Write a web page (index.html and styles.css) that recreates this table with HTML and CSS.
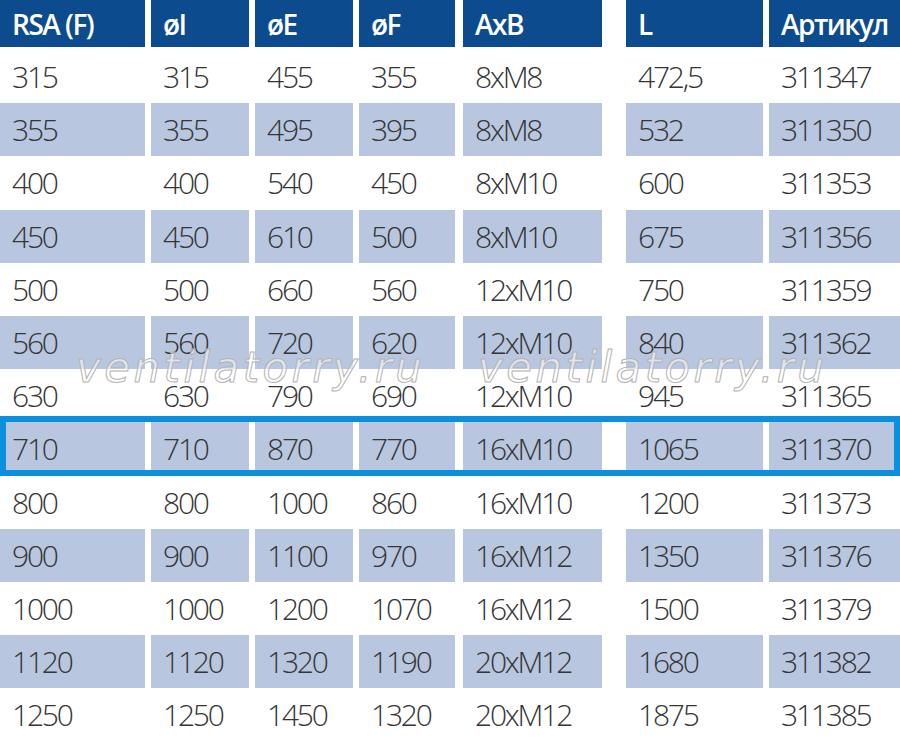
FILE: index.html
```html
<!DOCTYPE html>
<html lang="ru">
<head>
<meta charset="utf-8">
<title>RSA (F)</title>
<link rel="stylesheet" href="styles.css">
</head>
<body>
<div class="sheet">
  <div class="row head">
    <div class="cell c1">RSA (F)</div><div class="cell c2">øI</div><div class="cell c3">øE</div><div class="cell c4">øF</div><div class="cell c5">AxB</div><div class="cell c6">L</div><div class="cell c7">Артикул</div>
  </div>
  <div class="row"><div class="cell c1">315</div><div class="cell c2">315</div><div class="cell c3">455</div><div class="cell c4">355</div><div class="cell c5">8xM8</div><div class="cell c6">472,5</div><div class="cell c7">311347</div></div>
  <div class="row alt"><div class="cell c1">355</div><div class="cell c2">355</div><div class="cell c3">495</div><div class="cell c4">395</div><div class="cell c5">8xM8</div><div class="cell c6">532</div><div class="cell c7">311350</div></div>
  <div class="row"><div class="cell c1">400</div><div class="cell c2">400</div><div class="cell c3">540</div><div class="cell c4">450</div><div class="cell c5">8xM10</div><div class="cell c6">600</div><div class="cell c7">311353</div></div>
  <div class="row alt"><div class="cell c1">450</div><div class="cell c2">450</div><div class="cell c3">610</div><div class="cell c4">500</div><div class="cell c5">8xM10</div><div class="cell c6">675</div><div class="cell c7">311356</div></div>
  <div class="row"><div class="cell c1">500</div><div class="cell c2">500</div><div class="cell c3">660</div><div class="cell c4">560</div><div class="cell c5">12xM10</div><div class="cell c6">750</div><div class="cell c7">311359</div></div>
  <div class="row alt"><div class="cell c1">560</div><div class="cell c2">560</div><div class="cell c3">720</div><div class="cell c4">620</div><div class="cell c5">12xM10</div><div class="cell c6">840</div><div class="cell c7">311362</div></div>
  <div class="row"><div class="cell c1">630</div><div class="cell c2">630</div><div class="cell c3">790</div><div class="cell c4">690</div><div class="cell c5">12xM10</div><div class="cell c6">945</div><div class="cell c7">311365</div></div>
  <div class="row alt"><div class="cell c1">710</div><div class="cell c2">710</div><div class="cell c3">870</div><div class="cell c4">770</div><div class="cell c5">16xM10</div><div class="cell c6">1065</div><div class="cell c7">311370</div></div>
  <div class="row"><div class="cell c1">800</div><div class="cell c2">800</div><div class="cell c3">1000</div><div class="cell c4">860</div><div class="cell c5">16xM10</div><div class="cell c6">1200</div><div class="cell c7">311373</div></div>
  <div class="row alt"><div class="cell c1">900</div><div class="cell c2">900</div><div class="cell c3">1100</div><div class="cell c4">970</div><div class="cell c5">16xM12</div><div class="cell c6">1350</div><div class="cell c7">311376</div></div>
  <div class="row"><div class="cell c1">1000</div><div class="cell c2">1000</div><div class="cell c3">1200</div><div class="cell c4">1070</div><div class="cell c5">16xM12</div><div class="cell c6">1500</div><div class="cell c7">311379</div></div>
  <div class="row alt"><div class="cell c1">1120</div><div class="cell c2">1120</div><div class="cell c3">1320</div><div class="cell c4">1190</div><div class="cell c5">20xM12</div><div class="cell c6">1680</div><div class="cell c7">311382</div></div>
  <div class="row"><div class="cell c1">1250</div><div class="cell c2">1250</div><div class="cell c3">1450</div><div class="cell c4">1320</div><div class="cell c5">20xM12</div><div class="cell c6">1875</div><div class="cell c7">311385</div></div>

  <div class="highlight"></div>
  <div class="watermark wm1">ventilatorry.ru</div>
  <div class="watermark wm2">ventilatorry.ru</div>
</div>
</body>
</html>
```

FILE: styles.css
```css
html, body {
  margin: 0;
  padding: 0;
  background: #ffffff;
}
body {
  width: 900px;
  height: 743px;
  overflow: hidden;
}
.sheet {
  position: relative;
  width: 900px;
  height: 743px;
  display: flex;
  flex-direction: column;
  font-family: "Open Sans", "Noto Sans", sans-serif;
}
.row {
  display: grid;
  grid-template-columns: 151px 104px 104px 104px 163px 143px 131px;
  height: 53.2px;
  flex: none;
}
.cell {
  display: flex;
  align-items: center;
  padding-left: 12px;
  margin-right: 6px;
  font-size: 30px;
  font-weight: 300;
  letter-spacing: -2.2px;
  color: #353535;
  white-space: nowrap;
  overflow: hidden;
}
.c4 { margin-right: 8px; }
.c5 { margin-right: 24px; }
.c7 { margin-right: 0; }
.row.alt .cell {
  background: #b9c6df;
}
.row.head {
  height: 47px;
  margin-bottom: 3px;
}
.row.head .cell {
  background: #0c4b8e;
  color: #ffffff;
  font-size: 28px;
  font-weight: 600;
  letter-spacing: -1.5px;
}
.highlight {
  position: absolute;
  left: 0;
  top: 416px;
  width: 900px;
  height: 60px;
  box-sizing: border-box;
  border: 6px solid #0a90dc;
}
.watermark {
  position: absolute;
  top: 347px;
  font-family: "DejaVu Sans", sans-serif;
  font-style: oblique;
  font-size: 42px;
  line-height: 42px;
  letter-spacing: 3.4px;
  color: rgba(255, 255, 255, 0.55);
  -webkit-text-stroke: 1px #b3b3b3;
  white-space: nowrap;
}
.wm1 { left: 76px; }
.wm2 { left: 478px; }
```
